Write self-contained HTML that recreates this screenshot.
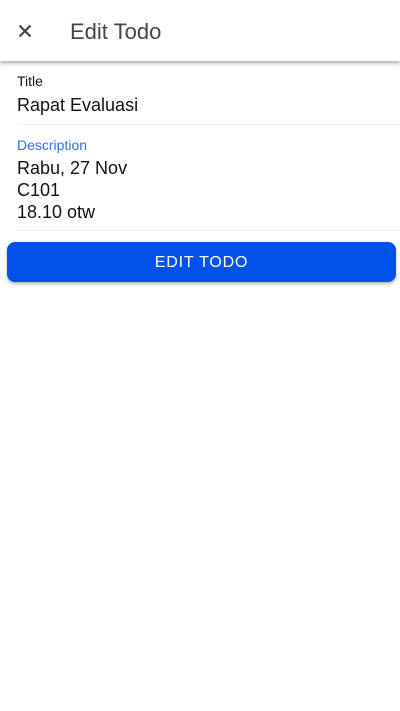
<!DOCTYPE html>
<html><head><style>
body{margin:0;width:400px;height:711px;background:#fff;font-family:"Liberation Sans",sans-serif;overflow:hidden;position:relative}
.hdr{position:absolute;left:0;top:0;width:400px;height:61px;background:#fff;box-shadow:0 2px 4px rgba(0,0,0,.35)}
.x{position:absolute;left:18px;top:24px}
.ht{position:absolute;left:70px;top:19px;font-size:22px;color:#444}
.lbl{position:absolute;left:17px;font-size:14px}
.val{position:absolute;left:17px;font-size:18px;color:#111;line-height:22px}
.div{position:absolute;left:17px;right:0;height:1px;background:#eee}
.btn{position:absolute;left:7px;top:242px;width:389px;height:40px;background:#0052e8;border-radius:8px;box-shadow:0 2px 3px rgba(0,0,0,.3);color:#fff;font-size:16px;letter-spacing:.8px;text-align:center;line-height:42px}
</style></head><body>
<div class="hdr">
<svg class="x" width="14" height="14" viewBox="0 0 14 14"><path d="M1.5 1.5L12.5 12.5M12.5 1.5L1.5 12.5" stroke="#444" stroke-width="2.2"/></svg>
<div class="ht">Edit Todo</div>
</div>
<div class="lbl" style="top:73px;color:#111">Title</div>
<div class="val" style="top:94px">Rapat Evaluasi</div>
<div class="div" style="top:124px"></div>
<div class="lbl" style="top:137px;color:#2f6fe8">Description</div>
<div class="val" style="top:157px">Rabu, 27 Nov<br>C101<br>18.10 otw</div>
<div class="div" style="top:230px"></div>
<div class="btn">EDIT TODO</div>
</body></html>
